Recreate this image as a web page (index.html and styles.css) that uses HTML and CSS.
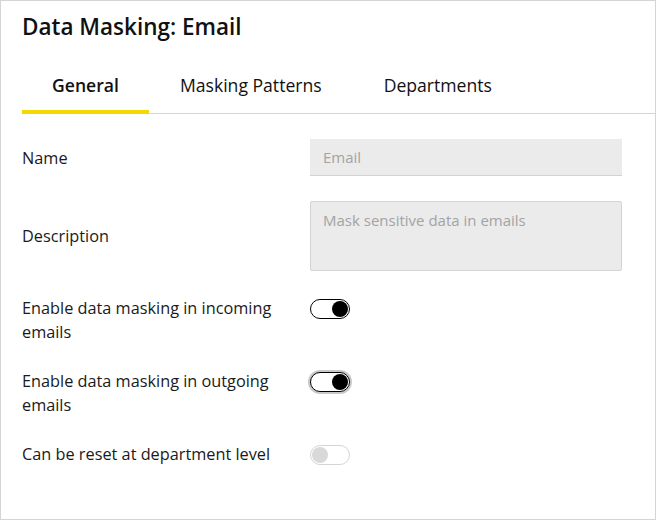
FILE: index.html
```html
<!DOCTYPE html>
<html lang="en">
<head>
<meta charset="utf-8">
<title>Data Masking: Email</title>
<link rel="stylesheet" href="styles.css">
</head>
<body>
<div class="frame">
  <h1 class="title">Data Masking: Email</h1>
  <div class="tabs">
    <div class="tab active">General</div>
    <div class="tab">Masking Patterns</div>
    <div class="tab">Departments</div>
  </div>
  <div class="form">
    <div class="row center">
      <div class="label">Name</div>
      <div class="input">Email</div>
    </div>
    <div class="row center">
      <div class="label">Description</div>
      <div class="textarea">Mask sensitive data in emails</div>
    </div>
    <div class="row">
      <div class="label">Enable data masking in incoming emails</div>
      <div class="toggle on"><span class="knob"></span></div>
    </div>
    <div class="row">
      <div class="label">Enable data masking in outgoing emails</div>
      <div class="toggle on focus"><span class="knob"></span></div>
    </div>
    <div class="row">
      <div class="label">Can be reset at department level</div>
      <div class="toggle disabled"><span class="knob"></span></div>
    </div>
  </div>
</div>
</body>
</html>
```
FILE: styles.css
```css
html, body {
  margin: 0;
  padding: 0;
  background: #fff;
}
body {
  font-family: "Open Sans", "Noto Sans", sans-serif;
  color: #1a1a1a;
}
.frame {
  box-sizing: border-box;
  width: 656px;
  height: 520px;
  border: 1px solid #d4d4d4;
  padding-left: 21px;
}
.title {
  margin: 0;
  padding-top: 10px;
  font-size: 22.5px;
  font-weight: 600;
  line-height: 32px;
  color: #111;
}
.tabs {
  display: flex;
  margin-top: 30px;
  border-bottom: 1px solid #d5d5d5;
}
.tab {
  padding: 0 31px 13px;
  font-size: 17.6px;
  line-height: 24px;
  border-bottom: 4px solid transparent;
  margin-bottom: -1px;
  color: #111;
}
.tab.active {
  font-weight: 600;
  border-bottom-color: #f5d800;
  padding: 0 30px 13px;
}
.form {
  display: flex;
  flex-direction: column;
  gap: 25px;
  padding-top: 25px;
}
.row {
  display: grid;
  grid-template-columns: 288px 312px;
  align-items: start;
}
.row.center {
  align-items: center;
}
.label {
  font-size: 16.3px;
  line-height: 24px;
  color: #1a1a1a;
  padding-right: 22px;
}
.input {
  box-sizing: border-box;
  height: 37px;
  background: #ebebeb;
  border-bottom: 1px solid #d3d3d3;
  padding: 0 13px;
  font-size: 15px;
  line-height: 36px;
  color: #a3a3a3;
}
.textarea {
  box-sizing: border-box;
  height: 70px;
  background: #ebebeb;
  border: 1px solid #d3d3d3;
  border-radius: 2px;
  padding: 8px 12px;
  font-size: 15px;
  line-height: 20px;
  color: #a3a3a3;
}
.toggle {
  box-sizing: border-box;
  width: 40px;
  height: 20px;
  margin-top: 3px;
  border: 1.5px solid #000;
  border-radius: 10px;
  display: flex;
  align-items: center;
  justify-content: flex-end;
  padding: 0 1px;
  background: #fff;
}
.knob {
  width: 16px;
  height: 16px;
  border-radius: 50%;
  background: #000;
}
.toggle.focus {
  box-shadow: 0 0 0 2px #c9c9c9;
}
.toggle.disabled {
  border-color: #d5d5d5;
  justify-content: flex-start;
}
.toggle.disabled .knob {
  background: #d9d9d9;
}
```
